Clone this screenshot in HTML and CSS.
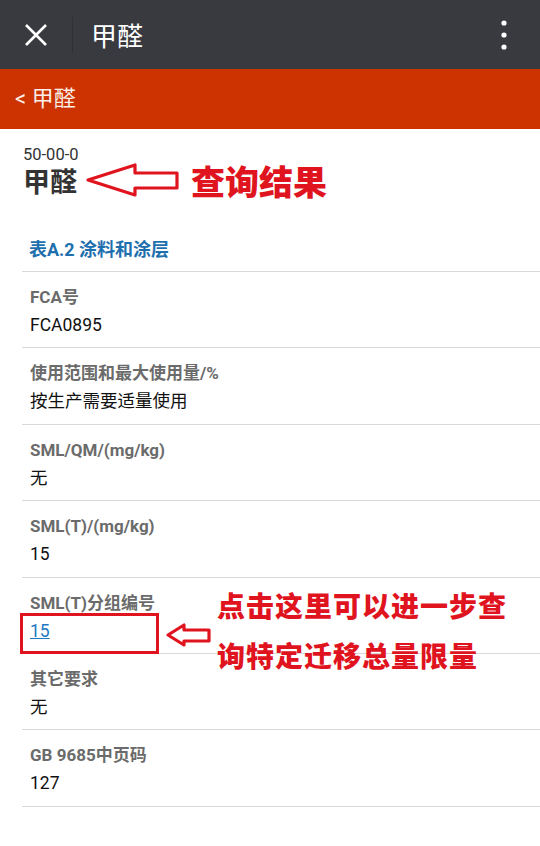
FILE: index.html
```html
<!DOCTYPE html>
<html lang="zh-CN">
<head>
    <meta charset="UTF-8">
    <meta name="viewport" content="width=device-width, initial-scale=1.0">
    <title>甲醛</title>
    <link rel="stylesheet" href="styles.css">
</head>
<body>
    <div class="topbar">
        <svg class="close" width="24" height="24" viewBox="0 0 24 24"><path d="M2 2L22 22M22 2L2 22" stroke="#fff" stroke-width="2.6" fill="none"/></svg>
        <span class="sep"></span>
        <span class="title">甲醛</span>
        <svg class="more" width="8" height="30" viewBox="0 0 8 30"><circle cx="4" cy="3" r="2.6" fill="#fff"/><circle cx="4" cy="15" r="2.6" fill="#fff"/><circle cx="4" cy="27" r="2.6" fill="#fff"/></svg>
    </div>

    <div class="navbar">&lt; 甲醛</div>

    <div class="head">
        <div class="cas">50-00-0</div>
        <div class="name-row">
            <span class="name">甲醛</span>
            <svg class="arrow-big" width="96" height="34" viewBox="0 0 96 34"><path d="M3 17L50 2V10H92V25H50V32Z" fill="#fff" stroke="#e0141e" stroke-width="3.2" stroke-linejoin="round"/></svg>
            <span class="mark">查询结果</span>
        </div>
    </div>

    <div class="section">表A.2 涂料和涂层</div>

    <div class="list">
        <div class="row">
            <div class="label">FCA号</div>
            <div class="value">FCA0895</div>
        </div>
        <div class="row">
            <div class="label">使用范围和最大使用量/%</div>
            <div class="value">按生产需要适量使用</div>
        </div>
        <div class="row">
            <div class="label">SML/QM/(mg/kg)</div>
            <div class="value">无</div>
        </div>
        <div class="row">
            <div class="label">SML(T)/(mg/kg)</div>
            <div class="value">15</div>
        </div>
        <div class="row">
            <div class="label">SML(T)分组编号</div>
            <div class="value"><a href="#">15</a></div>
            <!-- 标注 -->
            <span class="box"></span>
            <svg class="arrow-small" width="48" height="26" viewBox="0 0 48 26"><path d="M3 13L19 3V8H44V19H19V23Z" fill="#fff" stroke="#e0141e" stroke-width="3.2" stroke-linejoin="round"/></svg>
            <div class="note">点击这里可以进一步查<br>询特定迁移总量限量</div>
        </div>
        <div class="row">
            <div class="label">其它要求</div>
            <div class="value">无</div>
        </div>
        <div class="row">
            <div class="label">GB 9685中页码</div>
            <div class="value">127</div>
        </div>
    </div>
</body>
</html>
```

FILE: styles.css
```css
body { margin: 0; background: #fff; font-family: Roboto, "Noto Sans CJK SC", sans-serif; color: #111; }

.topbar { height: 69px; background: #393a3f; display: flex; align-items: center; padding: 0 24px; }
.close { margin-top: 1px; }
.sep { width: 1px; height: 36px; background: #2f3034; margin: 0 20px 0 24px; }
.title { color: #fff; font-size: 26px; flex: 1; margin-left: -2px; }
.more { margin-right: 8px; }

.navbar { height: 60px; background: #cc3300; color: #fbeee8; font-size: 22px; line-height: 60px; padding-left: 15px; }

.head { padding: 17px 23px 0; }
.cas { font-size: 16.5px; color: #333; line-height: 18px; }
.name-row { display: flex; align-items: center; height: 36px; margin-top: -2px; }
.name { font-size: 27px; font-weight: bold; color: #333; }
.arrow-big { margin-left: 8px; }
.mark { font-size: 34px; font-weight: 900; color: #e0141e; margin-left: 10px; }

.section { margin: 37px 0 0 29px; height: 36px; font-size: 18px; font-weight: bold; color: #1e6fae; }

.list { margin-left: 22px; border-top: 1px solid #d9d9d9; }
.row { position: relative; height: 75.4px; border-bottom: 1px solid #d9d9d9; padding-left: 8px; }
.label { font-size: 17px; font-weight: bold; color: #6b6b6b; padding-top: 13px; line-height: 24px; }
.value { font-size: 17.5px; color: #111; line-height: 24px; margin-top: 4px; }
.value a { color: #1e78c2; }

.box { position: absolute; left: -2px; top: 35px; width: 133px; height: 35px; border: 3px solid #e0141e; }
.arrow-small { position: absolute; left: 143px; top: 44px; }
.note { position: absolute; left: 195px; top: 5px; font-size: 28px; font-weight: 900; color: #e0141e; line-height: 50px; white-space: nowrap; letter-spacing: 1px; }
```
